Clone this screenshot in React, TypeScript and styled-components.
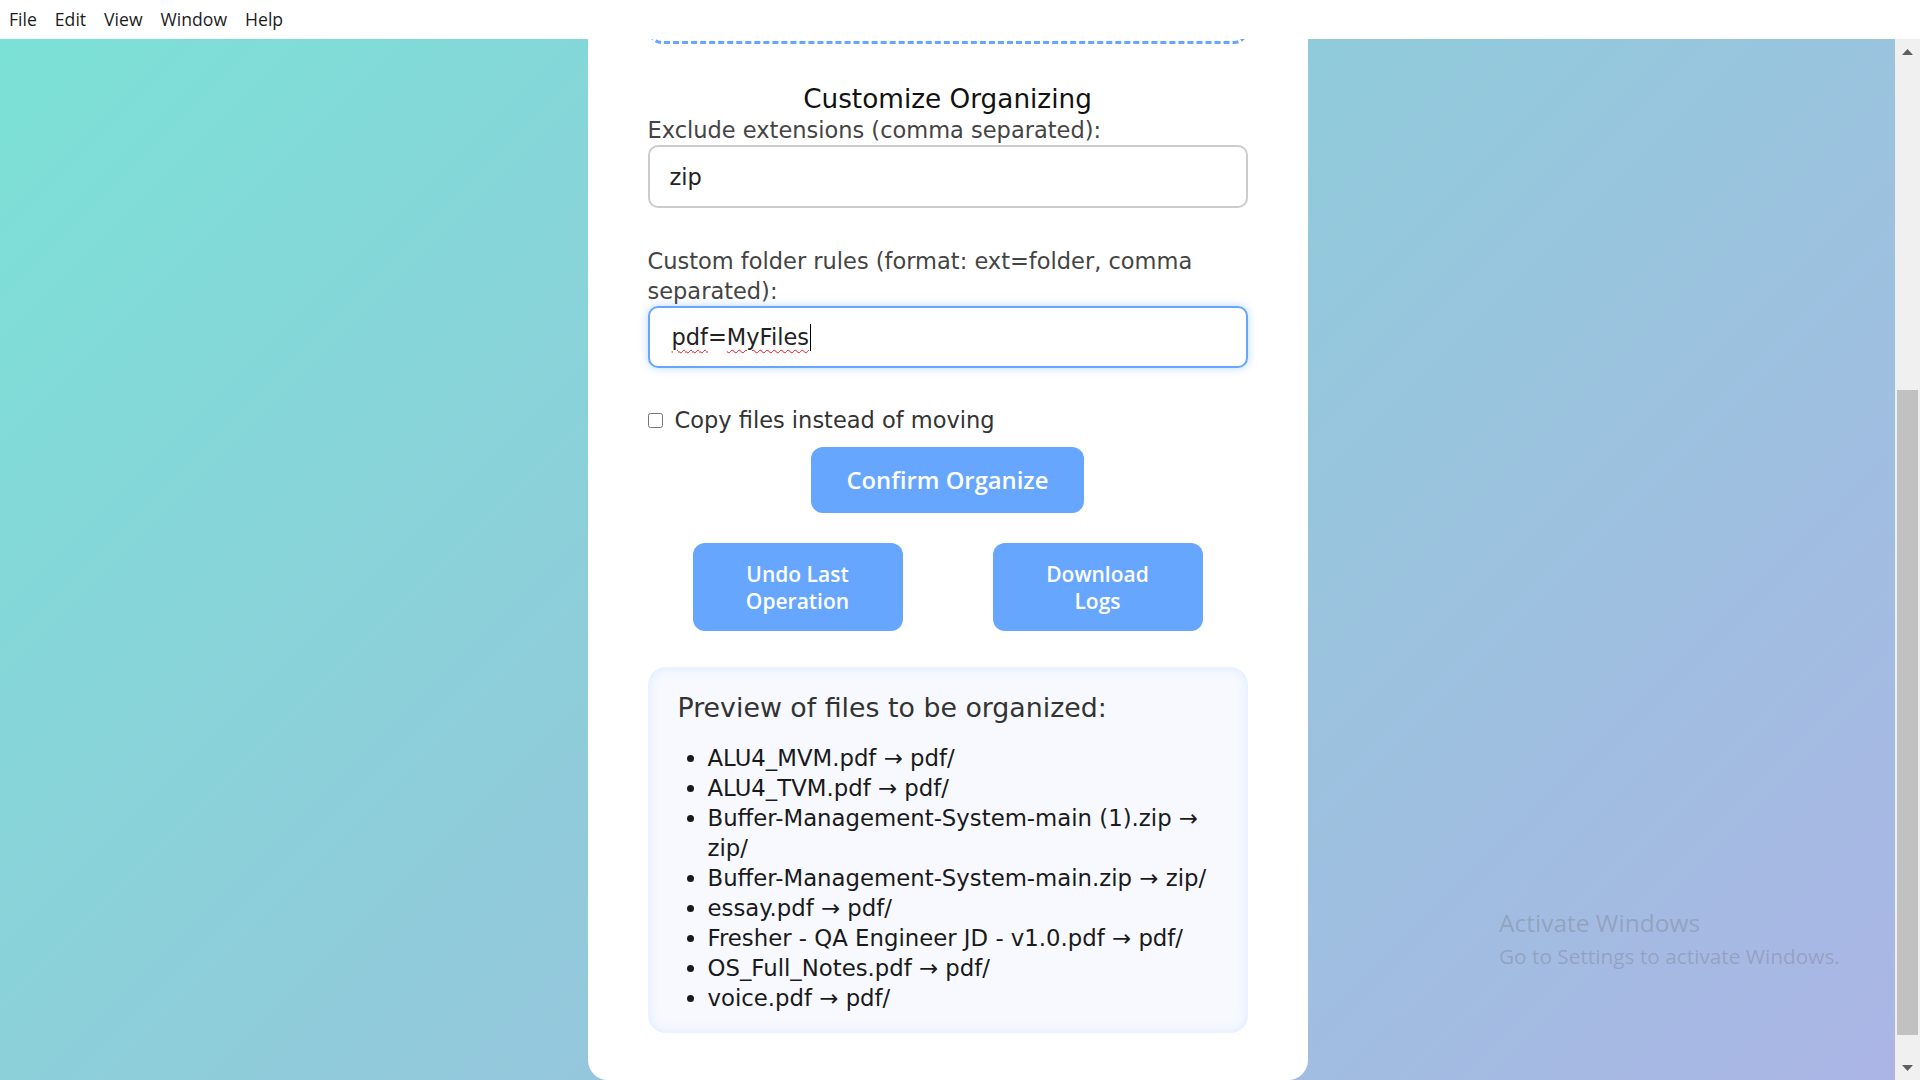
import React from "react";
import styled, { createGlobalStyle } from "styled-components";

const GlobalStyle = createGlobalStyle`
  html, body { margin: 0; padding: 0; height: 100%; overflow: hidden; }
  #root { height: 100%; }
  * { box-sizing: border-box; }
`;

const Window = styled.div`
  height: 100vh;
  display: flex;
  flex-direction: column;
  font-family: "DejaVu Sans", "Noto Sans", sans-serif;
`;

const MenuBar = styled.nav`
  flex: none;
  height: 39px;
  display: flex;
  align-items: center;
  gap: 18px;
  padding-left: 9px;
  background: #ffffff;
  font-family: "Open Sans", "Noto Sans", sans-serif;
  font-size: 17.6px;
  color: #1c1c1c;
`;

const MenuItem = styled.span`
  line-height: 39px;
  cursor: default;
`;

const Body = styled.div`
  flex: 1;
  min-height: 0;
  display: flex;
`;

const Viewport = styled.main`
  position: relative;
  flex: 1;
  min-width: 0;
  overflow: hidden;
  display: flex;
  flex-direction: column;
  justify-content: flex-end;
  align-items: center;
  background: linear-gradient(135deg, #7be1d6 0%, #92c9db 50%, #abb5e5 100%);
`;

const Card = styled.section`
  flex: none;
  width: 720px;
  padding: 40px 60px 47px;
  background: #ffffff;
  border-radius: 20px;
`;

const DropZone = styled.div`
  height: 160px;
  border: 3px dashed #66a6ff;
  border-radius: 14px;
  background: #ffffff;
`;

const Title = styled.h3`
  margin: 40px 0 0;
  font-size: 26.3px;
  line-height: 31px;
  font-weight: 400;
  color: #111111;
  text-align: center;
`;

const Label = styled.label<{ $gap?: number }>`
  display: block;
  margin-top: ${(p) => p.$gap ?? 0}px;
  font-size: 22.5px;
  line-height: 30px;
  color: #444444;
`;

const TextInput = styled.input`
  display: block;
  width: 100%;
  height: 63px;
  margin: 0;
  padding: 0 20px;
  border: 2px solid #cccccc;
  border-radius: 10px;
  font-family: inherit;
  font-size: 22.5px;
  color: #222222;
  background: #ffffff;
  outline: none;
`;

const FocusedInput = styled.div`
  display: flex;
  align-items: center;
  width: 100%;
  height: 62px;
  padding: 0 22px;
  border: 2px solid #66a6ff;
  border-radius: 10px;
  box-shadow: 0 0 8px rgba(102, 166, 255, 0.45);
  font-size: 22.5px;
  color: #222222;
  background: #ffffff;
  white-space: pre;
`;

const Misspelled = styled.span`
  text-decoration: underline wavy #e81123;
  text-decoration-thickness: 1px;
  text-underline-offset: 4px;
`;

const Caret = styled.span`
  display: inline-block;
  width: 1px;
  height: 27px;
  margin-left: 1px;
  background: #000000;
`;

const CheckRow = styled.label`
  display: flex;
  align-items: center;
  margin-top: 37px;
  font-size: 22.5px;
  line-height: 30px;
  color: #333333;
`;

const CheckBox = styled.input`
  width: 15px;
  height: 15px;
  margin: 0 12px 0 0;
`;

const Actions = styled.div`
  display: flex;
  flex-direction: column;
  align-items: center;
  gap: 30px;
  margin-top: 12px;
`;

const ButtonRow = styled.div`
  display: flex;
  justify-content: center;
  gap: 90px;
`;

const Button = styled.button<{ $fixed?: boolean }>`
  width: ${(p) => (p.$fixed ? "210px" : "auto")};
  padding: ${(p) => (p.$fixed ? "18px 30px 16px" : "18px 36px")};
  border: none;
  border-radius: 12px;
  background: #66a6ff;
  color: #ffffff;
  font-family: "Open Sans", "Noto Sans", sans-serif;
  font-size: ${(p) => (p.$fixed ? "21px" : "23.8px")};
  font-weight: 600;
  line-height: ${(p) => (p.$fixed ? "27px" : "30px")};
  cursor: pointer;
`;

const Preview = styled.section`
  margin-top: 36px;
  padding: 24px 30px 20px;
  border-radius: 18px;
  background: #f7f9ff;
  box-shadow: inset 0 0 12px rgba(102, 166, 255, 0.18);
`;

const PreviewTitle = styled.h3`
  margin: 0 0 18px;
  font-size: 26.8px;
  line-height: 34px;
  font-weight: 400;
  color: #333333;
`;

const FileList = styled.ul`
  margin: 0;
  padding-left: 30px;
  font-size: 22.8px;
  line-height: 30px;
  color: #1a1a1a;
`;

const Watermark = styled.div`
  position: absolute;
  left: 1499px;
  top: 866px;
  font-family: "Open Sans", "Noto Sans", sans-serif;
  color: rgba(110, 110, 120, 0.32);
  pointer-events: none;
`;

const WatermarkTitle = styled.div`
  font-size: 24.5px;
  line-height: 36px;
`;

const WatermarkText = styled.div`
  font-size: 20.8px;
  line-height: 31px;
`;

const Scrollbar = styled.aside`
  flex: none;
  width: 25px;
  display: flex;
  flex-direction: column;
  background: #f0f0f0;
`;

const ArrowCell = styled.div`
  flex: none;
  height: 25px;
  display: flex;
  align-items: center;
  justify-content: center;
`;

const Track = styled.div`
  flex: 1;
  display: flex;
  flex-direction: column;
  justify-content: flex-end;
  padding: 0 2px 20px;
`;

const Thumb = styled.div`
  height: 645px;
  background: #c1c1c1;
`;

const files = [
  "ALU4_MVM.pdf → pdf/",
  "ALU4_TVM.pdf → pdf/",
  "Buffer-Management-System-main (1).zip → zip/",
  "Buffer-Management-System-main.zip → zip/",
  "essay.pdf → pdf/",
  "Fresher - QA Engineer JD - v1.0.pdf → pdf/",
  "OS_Full_Notes.pdf → pdf/",
  "voice.pdf → pdf/",
];

export default function App() {
  return (
    <Window>
      <GlobalStyle />
      <MenuBar>
        {["File", "Edit", "View", "Window", "Help"].map((m) => (
          <MenuItem key={m}>{m}</MenuItem>
        ))}
      </MenuBar>
      <Body>
        <Viewport>
          <Card>
            <DropZone />
            <Title>Customize Organizing</Title>
            <Label htmlFor="exclude">Exclude extensions (comma separated):</Label>
            <TextInput id="exclude" value="zip" readOnly />
            <Label $gap={38}>Custom folder rules (format: ext=folder, comma separated):</Label>
            <FocusedInput role="textbox">
              <Misspelled>pdf</Misspelled>=<Misspelled>MyFiles</Misspelled>
              <Caret />
            </FocusedInput>
            <CheckRow>
              <CheckBox type="checkbox" />
              Copy files instead of moving
            </CheckRow>
            <Actions>
              <Button>Confirm Organize</Button>
              <ButtonRow>
                <Button $fixed>Undo Last Operation</Button>
                <Button $fixed>Download Logs</Button>
              </ButtonRow>
            </Actions>
            <Preview>
              <PreviewTitle>Preview of files to be organized:</PreviewTitle>
              <FileList>
                {files.map((f) => (
                  <li key={f}>{f}</li>
                ))}
              </FileList>
            </Preview>
          </Card>
          <Watermark>
            <WatermarkTitle>Activate Windows</WatermarkTitle>
            <WatermarkText>Go to Settings to activate Windows.</WatermarkText>
          </Watermark>
        </Viewport>
        <Scrollbar>
          <ArrowCell>
            <svg width="11" height="6" viewBox="0 0 11 6">
              <polygon points="5.5,0 11,6 0,6" fill="#606060" />
            </svg>
          </ArrowCell>
          <Track>
            <Thumb />
          </Track>
          <ArrowCell>
            <svg width="11" height="6" viewBox="0 0 11 6">
              <polygon points="0,0 11,0 5.5,6" fill="#606060" />
            </svg>
          </ArrowCell>
        </Scrollbar>
      </Body>
    </Window>
  );
}
